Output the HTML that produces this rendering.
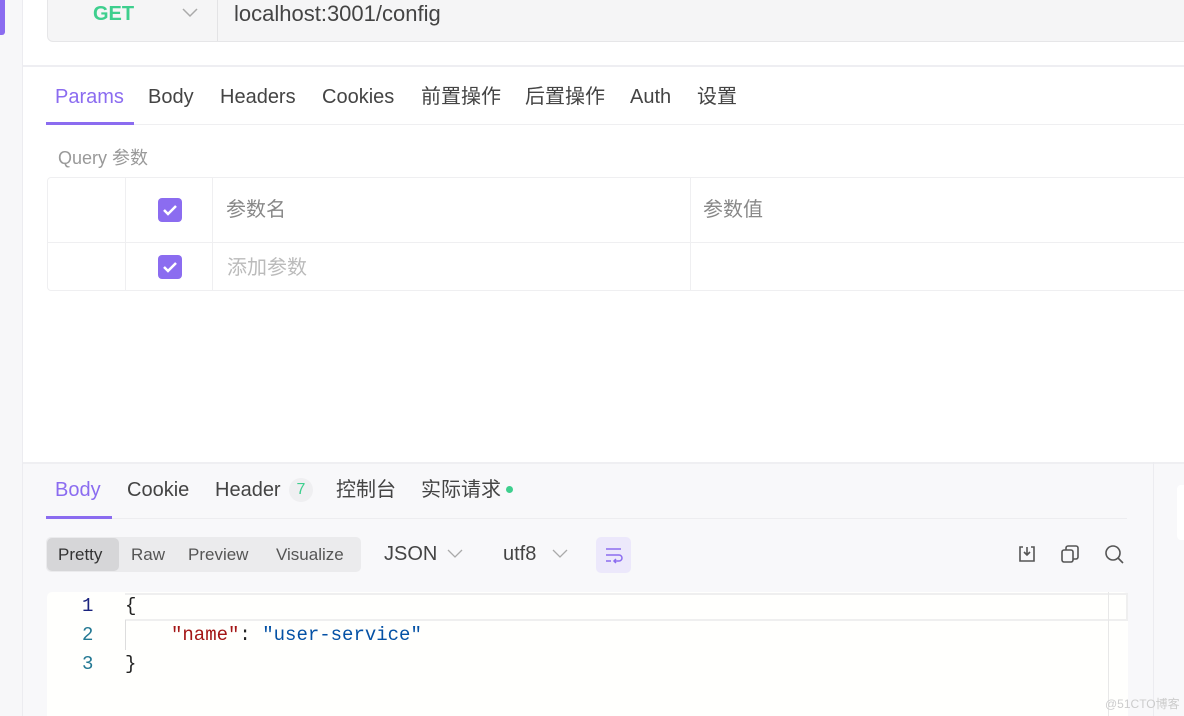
<!DOCTYPE html>
<html><head><meta charset="utf-8"><style>
*{margin:0;padding:0;box-sizing:border-box}
body{width:1184px;height:716px;overflow:hidden;background:#fff;font-family:"Liberation Sans","Noto Sans CJK SC",sans-serif;position:relative;color:#444}
.a{position:absolute;white-space:nowrap;line-height:24px}
.t{font-size:20px;color:#444}
.cb{position:absolute;width:24px;height:24px;border-radius:4px;background:#8b6cf0}
.cb svg{position:absolute;left:4px;top:4px}
</style></head><body>
<div class="a" style="left:0;top:0;width:23px;height:716px;background:#f7f7f9;border-right:1px solid #ececf0"></div>
<div class="a" style="left:0;top:0;width:5px;height:35px;background:#8b6cf0;border-radius:0 0 3px 0"></div>
<div class="a" style="left:47px;top:-10px;width:1150px;height:52px;background:#f5f5f6;border:1px solid #e6e6e8;border-radius:6px"></div>
<div class="a" style="left:217px;top:0;width:1px;height:41px;background:#e3e3e5"></div>
<div class="a" style="left:93px;top:2px;font-size:20px;font-weight:bold;color:#3ecf8e">GET</div>
<svg class="a" style="left:182px;top:7px" width="16" height="12"><path d="M1 2l7 7 7-7" fill="none" stroke="#aaa" stroke-width="1.5"/></svg>
<div class="a" style="left:234px;top:2px;font-size:22px;color:#444">localhost:3001/config</div>
<div class="a" style="left:23px;top:65px;width:1161px;height:2px;background:#eeeef2"></div>
<div class="a t" style="left:55px;top:85px;color:#8b6cf0">Params</div>
<div class="a t" style="left:148px;top:85px">Body</div>
<div class="a t" style="left:220px;top:85px">Headers</div>
<div class="a t" style="left:322px;top:85px">Cookies</div>
<div class="a t" style="left:421px;top:85px">前置操作</div>
<div class="a t" style="left:525px;top:85px">后置操作</div>
<div class="a t" style="left:630px;top:85px">Auth</div>
<div class="a t" style="left:697px;top:85px">设置</div>
<div class="a" style="left:47px;top:124px;width:1137px;height:1px;background:#efeff1"></div>
<div class="a" style="left:46px;top:122px;width:88px;height:3px;background:#8b6cf0"></div>
<div class="a" style="left:58px;top:146px;font-size:18px;color:#999">Query 参数</div>
<div class="a" style="left:47px;top:177px;width:1150px;height:114px;border:1px solid #efeff1;border-radius:4px"></div>
<div class="a" style="left:47px;top:242px;width:1137px;height:1px;background:#efeff1"></div>
<div class="a" style="left:125px;top:177px;width:1px;height:114px;background:#efeff1"></div>
<div class="a" style="left:212px;top:177px;width:1px;height:114px;background:#efeff1"></div>
<div class="a" style="left:690px;top:177px;width:1px;height:114px;background:#efeff1"></div>
<div class="cb" style="left:158px;top:198px"><svg width="16" height="16"><path d="M2 8l4 4 8-8" fill="none" stroke="#fff" stroke-width="2.5"/></svg></div>
<div class="cb" style="left:158px;top:255px"><svg width="16" height="16"><path d="M2 8l4 4 8-8" fill="none" stroke="#fff" stroke-width="2.5"/></svg></div>
<div class="a" style="left:226px;top:198px;font-size:20px;color:#888">参数名</div>
<div class="a" style="left:703px;top:198px;font-size:20px;color:#888">参数值</div>
<div class="a" style="left:227px;top:256px;font-size:20px;color:#bbb">添加参数</div>
<div class="a" style="left:23px;top:462px;width:1161px;height:254px;background:#f8f8fa;border-top:2px solid #efeff2"></div>
<div class="a" style="left:1153px;top:462px;width:1px;height:254px;background:#ececf0"></div>
<div class="a" style="left:1177px;top:485px;width:10px;height:55px;background:#fff;border-radius:4px"></div>
<div class="a t" style="left:55px;top:478px;color:#8b6cf0">Body</div>
<div class="a t" style="left:127px;top:478px">Cookie</div>
<div class="a t" style="left:215px;top:478px">Header</div>
<div class="a" style="left:289px;top:478px;width:24px;height:24px;border-radius:12px;background:#efeff1;color:#3ecf8e;font-size:16px;text-align:center;line-height:24px">7</div>
<div class="a t" style="left:336px;top:478px">控制台</div>
<div class="a t" style="left:421px;top:478px">实际请求</div>
<div class="a" style="left:506px;top:486px;width:7px;height:7px;border-radius:4px;background:#3ecf8e"></div>
<div class="a" style="left:47px;top:518px;width:1080px;height:1px;background:#ededf0"></div>
<div class="a" style="left:46px;top:516px;width:66px;height:3px;background:#8b6cf0"></div>
<div class="a" style="left:46px;top:537px;width:315px;height:35px;background:#ebebed;border-radius:5px"></div>
<div class="a" style="left:47px;top:538px;width:72px;height:33px;background:#d6d6d8;border-radius:5px"></div>
<div class="a" style="left:58px;top:543px;font-size:17px;color:#333">Pretty</div>
<div class="a" style="left:131px;top:543px;font-size:17px;color:#555">Raw</div>
<div class="a" style="left:188px;top:543px;font-size:17px;color:#555">Preview</div>
<div class="a" style="left:276px;top:543px;font-size:17px;color:#555">Visualize</div>
<div class="a" style="left:384px;top:542px;font-size:20px;color:#444">JSON</div>
<svg class="a" style="left:447px;top:548px" width="16" height="12"><path d="M1 2l7 7 7-7" fill="none" stroke="#aaa" stroke-width="1.3"/></svg>
<div class="a" style="left:503px;top:542px;font-size:20px;color:#444">utf8</div>
<svg class="a" style="left:552px;top:548px" width="16" height="12"><path d="M1 2l7 7 7-7" fill="none" stroke="#aaa" stroke-width="1.3"/></svg>
<div class="a" style="left:596px;top:537px;width:35px;height:36px;background:#ece8fb;border-radius:5px"></div>
<svg class="a" style="left:604px;top:546px" width="20" height="18"><path d="M2 3h15M2 9h13a3 3 0 0 1 0 6h-5M12 13l-2 2 2 2M2 15h5" fill="none" stroke="#8b6cf0" stroke-width="1.5"/></svg>
<svg class="a" style="left:1017px;top:544px" width="20" height="20"><path d="M6 3H3v14h14V3h-3M10 3v8M7 8l3 3 3-3" fill="none" stroke="#555" stroke-width="1.6"/></svg>
<svg class="a" style="left:1060px;top:544px" width="20" height="20"><rect x="2" y="6" width="11" height="12" rx="2" fill="none" stroke="#555" stroke-width="1.6"/><path d="M6 6V4a2 2 0 0 1 2-2h8a2 2 0 0 1 2 2v9a2 2 0 0 1-2 2h-3" fill="none" stroke="#555" stroke-width="1.6"/></svg>
<svg class="a" style="left:1104px;top:544px" width="22" height="22"><circle cx="9" cy="9" r="7" fill="none" stroke="#555" stroke-width="1.6"/><path d="M14 14l5 5" stroke="#555" stroke-width="1.6"/></svg>
<div class="a" style="left:47px;top:592px;width:1081px;height:124px;background:#fffffd;border-radius:5px 5px 0 0"></div>
<div class="a" style="left:125px;top:593px;width:1003px;height:28px;border:2px solid #efefef;border-left:none"></div>
<div class="a" style="left:1108px;top:592px;width:1px;height:124px;background:#e8e8e8"></div>
<div class="a" style="left:125px;top:620px;width:1px;height:30px;background:#ddd"></div>
<div class="a" style="left:82px;top:594px;font-family:'Liberation Mono',monospace;font-size:19px;color:#1a237e">1</div>
<div class="a" style="left:82px;top:623px;font-family:'Liberation Mono',monospace;font-size:19px;color:#237893">2</div>
<div class="a" style="left:82px;top:652px;font-family:'Liberation Mono',monospace;font-size:19px;color:#237893">3</div>
<div class="a" style="left:125px;top:594px;font-family:'Liberation Mono',monospace;font-size:19px;color:#222">{</div>
<div class="a" style="left:171px;top:623px;font-family:'Liberation Mono',monospace;font-size:19px;color:#222"><span style="color:#a31515">"name"</span>: <span style="color:#0451a5">"user-service"</span></div>
<div class="a" style="left:125px;top:652px;font-family:'Liberation Mono',monospace;font-size:19px;color:#222">}</div>
<div class="a" style="left:1105px;top:692px;font-size:12px;color:#ccc">@51CTO博客</div>
</body></html>
